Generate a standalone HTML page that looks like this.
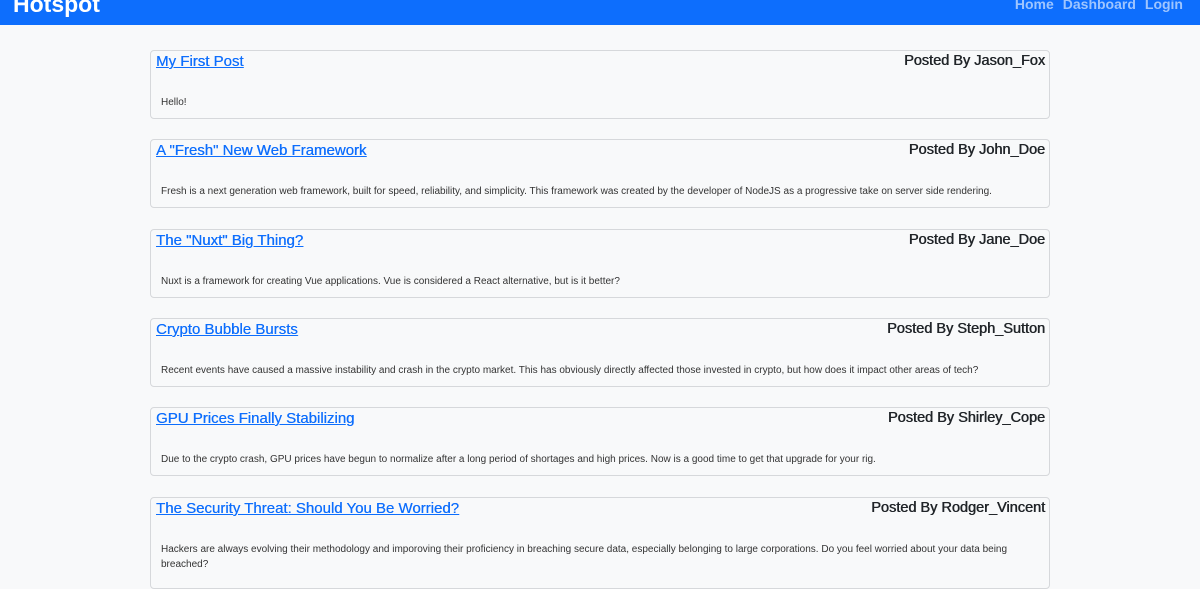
<!DOCTYPE html>
<html><head><meta charset="utf-8"><style>
body{margin:0;background:#f8f9fa;font-family:"Liberation Sans",sans-serif;width:1200px;height:570px;overflow:hidden}
.nav{height:25px;background:#0d6efd;position:relative}
.brand{position:absolute;left:13px;top:-9px;color:#fff;font-size:23px;font-weight:bold}
.links{position:absolute;right:17px;top:-4px;font-size:14px;font-weight:bold;color:#9ec5fe}
.links span{margin-left:9px}
.card{position:absolute;left:150px;width:898px;border:1px solid #d6d8db;border-radius:4px;background:#f8f9fa;height:67px}
.t{position:absolute;left:5px;top:2px;font-size:15px;color:#0d6efd;text-decoration:underline;text-shadow:0.3px 0 0 #0d6efd}
.a{position:absolute;right:4px;top:2px;font-size:14.5px;color:#212529;text-shadow:0.5px 0 0 #212529}
.b{position:absolute;left:10px;top:44px;font-size:10px;color:#333;line-height:15px;width:870px}
</style></head><body>
<div class="nav"><div class="brand">Hotspot</div><div class="links"><span>Home</span><span>Dashboard</span><span>Login</span></div></div>
<div class="card" style="top:50px"><div class="t">My First Post</div><div class="a">Posted By Jason_Fox</div><div class="b">Hello!</div></div>
<div class="card" style="top:139px"><div class="t">A "Fresh" New Web Framework</div><div class="a">Posted By John_Doe</div><div class="b">Fresh is a next generation web framework, built for speed, reliability, and simplicity. This framework was created by the developer of NodeJS as a progressive take on server side rendering.</div></div>
<div class="card" style="top:229px"><div class="t">The "Nuxt" Big Thing?</div><div class="a">Posted By Jane_Doe</div><div class="b">Nuxt is a framework for creating Vue applications. Vue is considered a React alternative, but is it better?</div></div>
<div class="card" style="top:318px"><div class="t">Crypto Bubble Bursts</div><div class="a">Posted By Steph_Sutton</div><div class="b">Recent events have caused a massive instability and crash in the crypto market. This has obviously directly affected those invested in crypto, but how does it impact other areas of tech?</div></div>
<div class="card" style="top:407px"><div class="t">GPU Prices Finally Stabilizing</div><div class="a">Posted By Shirley_Cope</div><div class="b">Due to the crypto crash, GPU prices have begun to normalize after a long period of shortages and high prices. Now is a good time to get that upgrade for your rig.</div></div>
<div class="card" style="top:497px;height:90px"><div class="t">The Security Threat: Should You Be Worried?</div><div class="a">Posted By Rodger_Vincent</div><div class="b">Hackers are always evolving their methodology and imporoving their proficiency in breaching secure data, especially belonging to large corporations. Do you feel worried about your data being breached?</div></div>
</body></html>
